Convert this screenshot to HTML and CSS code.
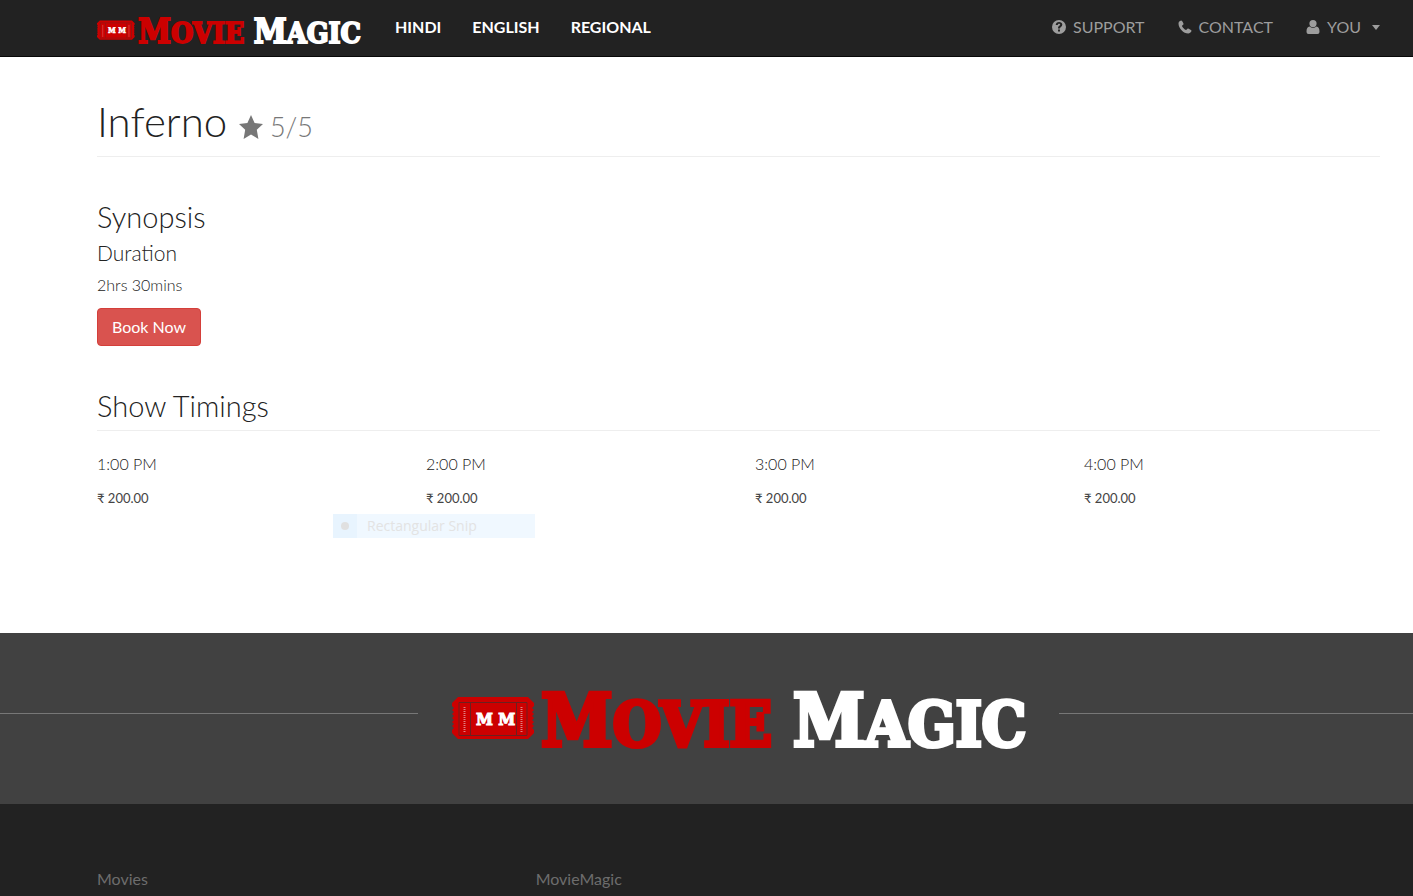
FILE: index.html
```html
<!DOCTYPE html>
<html lang="en">
<head>
<meta charset="utf-8">
<title>Inferno - Movie Magic</title>
<link rel="stylesheet" href="styles.css">
</head>
<body>
<header class="navbar">
  <a class="brand" href="#" aria-label="Movie Magic">
    <svg class="brand-logo" viewBox="0 0 574 60">
      <path class="ticket" d="M6 8H76L82 14V17l-2 2 2 2-2 2 2 2-2 2 2 2-2 2 2 2-2 2 2 2-2 2 2 2V44L76 50H6L0 44V41l2-2-2-2 2-2-2-2 2-2-2-2 2-2-2-2 2-2-2-2 2-2-2-2V14Z"/>
      <path class="ticket-line" d="M7 13.500H75V46.500H7ZM18.500 14V46M64.500 14V46"/>
      <path class="ticket-code" d="M12.500 18V43M69.500 18V43"/>
      <text class="logo-text logo-mm logo-white" x="24" y="36">M M</text>
      <text class="logo-text logo-red" x="89" y="57"><tspan class="logo-cap">M</tspan>OVIE</text>
      <text class="logo-text logo-white" x="341" y="57"><tspan class="logo-cap">M</tspan>AGIC</text>
    </svg>
  </a>
  <nav class="nav nav-main">
    <a href="#">HINDI</a>
    <a href="#">ENGLISH</a>
    <a href="#">REGIONAL</a>
  </nav>
  <nav class="nav nav-side">
    <a href="#"><svg class="icon" viewBox="0 0 14 14"><path fill-rule="evenodd" d="M7 0a7 7 0 1 1 0 14A7 7 0 0 1 7 0ZM6 9.500v2h2v-2ZM3.700 5h2c.2-1 .7-1.300 1.300-1.300.7 0 1.200.4 1.200.9 0 1.200-2.200 1.300-2.200 3.900h2c0-1.500 2.300-1.700 2.300-4C10.300 3 8.900 2 7.100 2 5.100 2 3.900 3.100 3.700 5Z"/></svg>SUPPORT</a>
    <a href="#"><svg class="icon" viewBox="0 0 14 14"><path d="M3.300.5C2.400.5.6 1.300.5 3.200c-.1 5.300 5.400 10.500 10 10.300 1.900-.1 3-1.700 3-2.900 0-.6-3-2.200-3.600-2.200-.7 0-1.200 1.600-1.900 1.600C6.900 9.800 4.200 7.200 4 6c0-.7 1.600-1.200 1.600-1.900C5.600 3.500 4.100.5 3.300.5Z"/></svg>CONTACT</a>
    <a href="#"><svg class="icon" viewBox="0 0 14 14"><path d="M7 0a3.500 3.500 0 0 1 0 7.200A3.500 3.500 0 0 1 7 0ZM3.600 6.500a4.800 4.800 0 0 0 6.800 0C12.500 6.600 13.500 8.500 13.500 11.500c0 1.700-.8 2.500-2 2.500h-9c-1.200 0-2-.8-2-2.500 0-3 1-4.900 3.100-5Z"/></svg>YOU<span class="caret"></span></a>
  </nav>
</header>

<main class="page">
  <h1 class="title">Inferno <small><svg class="star" viewBox="0 0 24 24"><path d="M12 0l3.600 7.900 8.400 1-6.200 5.900L19.400 24 12 19.500 4.600 24l1.600-9.200L0 8.900l8.400-1Z"/></svg> 5/5</small></h1>

  <section class="synopsis">
    <h2>Synopsis</h2>
    <h3>Duration</h3>
    <p>2hrs 30mins</p>
    <button class="book" type="button">Book Now</button>
  </section>

  <section class="timings">
    <h2>Show Timings</h2>
    <div class="shows">
      <div class="show"><p>1:00 PM</p><small>₹ 200.00</small></div>
      <div class="show"><p>2:00 PM</p><small>₹ 200.00</small></div>
      <div class="show"><p>3:00 PM</p><small>₹ 200.00</small></div>
      <div class="show"><p>4:00 PM</p><small>₹ 200.00</small></div>
    </div>
    <div class="snip"><span class="snip-mark"></span><span class="snip-label">Rectangular Snip</span></div>
  </section>
</main>

<div class="band">
  <svg class="band-logo" viewBox="0 0 574 60" role="img" aria-label="Movie Magic">
    <path class="ticket" d="M6 8H76L82 14V17l-2 2 2 2-2 2 2 2-2 2 2 2-2 2 2 2-2 2 2 2-2 2 2 2V44L76 50H6L0 44V41l2-2-2-2 2-2-2-2 2-2-2-2 2-2-2-2 2-2-2-2 2-2-2-2V14Z"/>
    <path class="ticket-line" d="M7 13.500H75V46.500H7ZM18.500 14V46M64.500 14V46"/>
    <path class="ticket-code" d="M12.500 18V43M69.500 18V43"/>
    <text class="logo-text logo-mm logo-white" x="24" y="36">M M</text>
    <text class="logo-text logo-red" x="89" y="57"><tspan class="logo-cap">M</tspan>OVIE</text>
    <text class="logo-text logo-white" x="341" y="57"><tspan class="logo-cap">M</tspan>AGIC</text>
  </svg>
</div>

<footer class="footer">
  <div>Movies</div>
  <div>MovieMagic</div>
</footer>
</body>
</html>
```
FILE: styles.css
```css
* { box-sizing: border-box; }
body {
  margin: 0;
  background: #fff;
  color: #222;
  font-family: Lato, "Open Sans", sans-serif;
  font-size: 16px;
  line-height: 24px;
}
h1, h2, h3, p { margin: 0; font-weight: 300; }
a { color: inherit; text-decoration: none; }

/* Logo */
.ticket { fill: #c00; }
.ticket-line { fill: none; stroke: #6b2020; }
.ticket-code { fill: none; stroke: #e08080; stroke-width: 2; stroke-dasharray: 1 1; }
.logo-text {
  font-family: "DejaVu Serif Condensed", "DejaVu Serif", serif;
  font-size: 62px;
  font-weight: 700;
  stroke-width: 4px;
}
.logo-cap { font-size: 72px; }
.logo-red { fill: #c00; stroke: #c00; }
.logo-white { fill: #fff; stroke: #fff; }
.logo-mm { font-size: 17px; stroke-width: 1px; }

/* Navigation */
.navbar {
  display: flex;
  height: 57px;
  padding: 0 33px 0 97px;
  background: #222;
  border-bottom: 1px solid #080808;
}
.brand { display: flex; padding-top: 16px; }
.brand-logo { width: 264px; height: 29px; overflow: visible; }
.nav { display: flex; gap: 33px; padding-top: 15px; }
.nav a { display: flex; align-items: center; height: 24px; }
.nav-main { gap: 31px; margin-left: 34px; color: #fff; font-weight: 700; }
.nav-side { margin-left: auto; color: #9d9d9d; }
.icon { width: 14px; height: 14px; margin-right: 7px; fill: currentColor; }
.caret {
  margin-left: 11px;
  border: 4px solid transparent;
  border-top: 5px solid;
  border-bottom: 0;
}

/* Page */
.page { padding: 43px 33px 0 97px; min-height: 576px; }
.title {
  padding-bottom: 14px;
  border-bottom: 1px solid #eee;
  font-size: 42px;
  line-height: 42px;
}
.title small { color: #777; font-size: 27px; line-height: 27px; }
.star { width: 24px; height: 24px; fill: #777; vertical-align: -2px; }
h2 { font-size: 29px; line-height: 30px; }
h3 { margin-top: 10px; font-size: 21px; line-height: 22px; }
.synopsis { margin-top: 45px; }
.synopsis p { margin-top: 9px; }
.book {
  display: block;
  height: 38px;
  margin-top: 11px;
  padding: 0 14px 2px;
  border: 1px solid #d43f3a;
  border-radius: 4px;
  background: #d9534f;
  color: #fff;
  font: 16px Lato, sans-serif;
}
.timings { position: relative; margin-top: 45px; }
.timings h2 { padding-bottom: 9px; border-bottom: 1px solid #eee; }
.shows { display: grid; grid-template-columns: repeat(4, 1fr); gap: 33px; margin-top: 21px; }
.show small { display: block; margin-top: 10px; color: #444; font-size: 13px; }
.snip {
  position: absolute;
  left: 236px;
  top: 123px;
  display: flex;
  width: 202px;
  height: 24px;
  background: #f0f8ff;
  color: #e3e3e3;
  font: 14px/24px "Open Sans", "Noto Sans", sans-serif;
}
.snip-mark { display: grid; place-items: center; width: 24px; background: #e8f4fe; }
.snip-mark::before { content: ""; width: 8px; height: 8px; border-radius: 50%; background: #e0e0e0; }
.snip-label { padding-left: 10px; }

/* Logo band: the left rule is longer, following the page's wider left margin */
.band {
  display: flex;
  align-items: center;
  height: 171px;
  background: #414141;
}
.band::before, .band::after { content: ""; height: 1px; margin-bottom: 10px; background: #777; }
.band::before { flex: 1 1 64px; }
.band::after { flex: 1 1 0; }
.band-logo { width: 574px; height: 60px; margin: 0 33px 0 34px; overflow: visible; }

.footer {
  display: grid;
  grid-template-columns: repeat(3, 1fr);
  gap: 33px;
  padding: 63px 33px 5px 97px;
  background: #222;
  color: #6d6d6d;
}
```
